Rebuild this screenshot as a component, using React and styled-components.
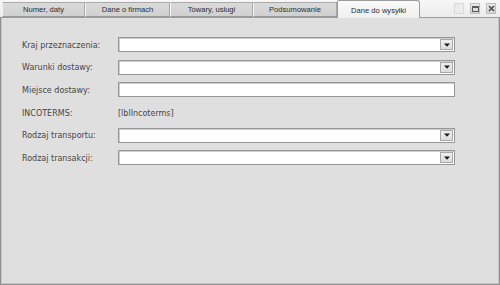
import React from "react";
import styled, { createGlobalStyle } from "styled-components";

const Global = createGlobalStyle`
  html, body { margin: 0; padding: 0; background: #f2f2f2; }
  * { box-sizing: border-box; }
`;

const Window = styled.div`
  width: 500px;
  height: 285px;
  display: flex;
  flex-direction: column;
  background: linear-gradient(#f7f7f7, #ececec 17px, #dfdfdf 17px);
  font-family: "DejaVu Sans", Verdana, sans-serif;
`;

const TabStrip = styled.div`
  height: 18px;
  display: flex;
  align-items: flex-end;
  padding-left: 2px;
  position: relative;
  z-index: 1;
`;

const Tab = styled.div`
  width: ${(p) => p.$w}px;
  height: ${(p) => (p.$active ? 18 : 15)}px;
  margin-bottom: ${(p) => (p.$active ? 0 : 1)}px;
  display: flex;
  align-items: center;
  justify-content: center;
  font-family: "Liberation Sans", Arial, sans-serif;
  font-size: 7.6px;
  color: #2c2c2c;
  background: ${(p) =>
    p.$active
      ? "linear-gradient(#fbfbfb, #efefef)"
      : "linear-gradient(#dadada, #d0d0d0)"};
  border: 1px solid ${(p) => (p.$active ? "#9c9c9c" : "#a9a9a9")};
  border-bottom: ${(p) => (p.$active ? "none" : "1px solid #9a9a9a")};
  border-left-color: ${(p) => (p.$active ? "#9c9c9c" : "#f4f4f4")};
  border-radius: ${(p) => (p.$active ? "2px 3px 0 0" : "0")};
  padding-top: ${(p) => (p.$active ? 1 : 0)}px;
`;

const Controls = styled.div`
  margin-left: auto;
  align-self: flex-start;
  display: flex;
  gap: 6px;
  padding: 3px 4px 0 0;
`;

const CtrlBtn = styled.div`
  width: 10px;
  height: 11px;
  border: 1px solid ${(p) => (p.$faded ? "#d9d9d9" : "#bdbdbd")};
  background: ${(p) => (p.$faded ? "#ececec" : "linear-gradient(#ebebeb, #d3d3d3)")};
  display: flex;
  align-items: center;
  justify-content: center;
`;

const Panel = styled.div`
  flex: 1;
  margin-top: -1px;
  background: #dfdfdf;
  border: 1px solid #8e8e8e;
  border-top-color: #9c9c9c;
  box-shadow: inset 1px 0 0 #c9c9c9, inset -1px 0 0 #c9c9c9, inset 0 -1px 0 #c6c6c6;
  padding: 19px 0 0 21px;
`;

const Form = styled.div`
  display: grid;
  grid-template-columns: 96px 337px;
  grid-auto-rows: 15px;
  row-gap: 7.7px;
`;

const Label = styled.div`
  font-size: 8px;
  color: #464646;
  display: flex;
  align-items: center;
  padding-top: 1px;
`;

const Value = styled(Label)``;

const Field = styled.div`
  background: #ffffff;
  border: 1px solid #969696;
  box-shadow: inset 1px 1px 0 #cdcdcd;
  display: flex;
  justify-content: flex-end;
  align-items: center;
  padding-right: 1px;
`;

const DropBtn = styled.div`
  width: 13px;
  height: 11px;
  border: 1px solid #a8a8a8;
  background: linear-gradient(#f0f0f0, #dcdcdc);
  display: flex;
  align-items: center;
  justify-content: center;
`;

const Arrow = () => (
  <svg width="6" height="4" viewBox="0 0 6 4">
    <path d="M0 0.5 H6 L3 3.8 Z" fill="#1a1a1a" />
  </svg>
);

const tabs = [
  ["Numer, daty", 83],
  ["Dane o firmach", 85],
  ["Towary, usługi", 83],
  ["Podsumowanie", 84],
  ["Dane do wysyłki", 83],
];

const rows = [
  { label: "Kraj przeznaczenia:", kind: "combo" },
  { label: "Warunki dostawy:", kind: "combo" },
  { label: "Miejsce dostawy:", kind: "text" },
  { label: "INCOTERMS:", kind: "value", value: "[lblIncoterms]" },
  { label: "Rodzaj transportu:", kind: "combo" },
  { label: "Rodzaj transakcji:", kind: "combo" },
];

export default function App() {
  return (
    <>
      <Global />
      <Window>
        <TabStrip>
          {tabs.map(([t, w], i) => (
            <Tab key={t} $w={w} $active={i === 4}>
              {t}
            </Tab>
          ))}
          <Controls>
            <CtrlBtn $faded />
            <CtrlBtn>
              <svg width="7" height="6" viewBox="0 0 7 6">
                <rect x="0.5" y="0.5" width="6" height="5" fill="none" stroke="#5a5a5a" />
                <rect x="0.5" y="0.5" width="6" height="1.5" fill="#5a5a5a" />
              </svg>
            </CtrlBtn>
            <CtrlBtn>
              <svg width="7" height="7" viewBox="0 0 7 7">
                <path d="M1 1 L6 6 M6 1 L1 6" stroke="#4a4a4a" strokeWidth="1.5" />
              </svg>
            </CtrlBtn>
          </Controls>
        </TabStrip>
        <Panel>
          <Form>
            {rows.map((r) => (
              <React.Fragment key={r.label}>
                <Label>{r.label}</Label>
                {r.kind === "value" ? (
                  <Value>{r.value}</Value>
                ) : (
                  <Field>
                    {r.kind === "combo" && (
                      <DropBtn>
                        <Arrow />
                      </DropBtn>
                    )}
                  </Field>
                )}
              </React.Fragment>
            ))}
          </Form>
        </Panel>
      </Window>
    </>
  );
}
